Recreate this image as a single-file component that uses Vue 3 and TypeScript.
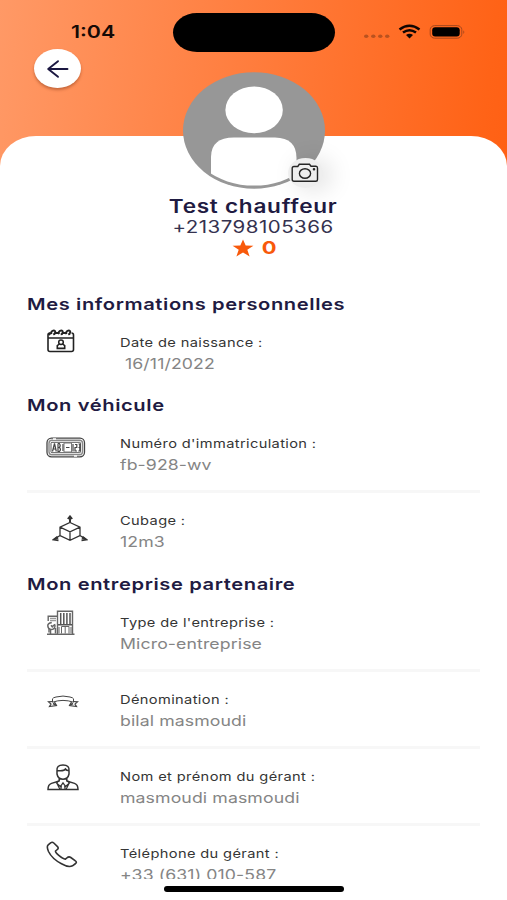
<script setup lang="ts">
interface Row {
  icon: string
  label: string
  value: string
  indent?: boolean
}
interface Section {
  title: string
  rows: Row[]
}

const sections: Section[] = [
  {
    title: 'Mes informations personnelles',
    rows: [{ icon: 'calendar', label: 'Date de naissance :', value: '16/11/2022', indent: true }],
  },
  {
    title: 'Mon véhicule',
    rows: [
      { icon: 'plate', label: "Numéro d'immatriculation :", value: 'fb-928-wv' },
      { icon: 'cube', label: 'Cubage :', value: '12m3' },
    ],
  },
  {
    title: 'Mon entreprise partenaire',
    rows: [
      { icon: 'building', label: "Type de l'entreprise :", value: 'Micro-entreprise' },
      { icon: 'ribbon', label: 'Dénomination :', value: 'bilal masmoudi' },
      { icon: 'manager', label: 'Nom et prénom du gérant :', value: 'masmoudi masmoudi' },
      { icon: 'phone', label: 'Téléphone du gérant :', value: '+33 (631) 010-587' },
    ],
  },
]
</script>

<template>
  <main class="screen">
    <header class="status">
      <span class="time"><span class="wide">1:04</span></span>
      <span class="island"></span>
      <svg class="signals" width="104" height="18" viewBox="0 0 104 18">
        <g fill="#b9521f">
          <ellipse cx="3.2" cy="13.2" rx="2.2" ry="1.8" /><ellipse cx="10.3" cy="13.2" rx="2.2" ry="1.8" />
          <ellipse cx="17.3" cy="13.2" rx="2.2" ry="1.8" /><ellipse cx="24.2" cy="13.2" rx="2.2" ry="1.8" />
        </g>
        <g fill="none" stroke="#100603" stroke-width="2.5">
          <path d="M36.5 6.5Q46.5-1 56.5 6.5" />
          <path d="M40 9.6Q46.5 4.8 53 9.6" />
        </g>
        <path d="M43 12Q46.5 9.6 50 12L46.5 15.4Z" fill="#100603" />
        <rect x="67.2" y="2.6" width="31.6" height="12.6" rx="4.5" ry="4" fill="none" stroke="#a8481c" />
        <rect x="69.2" y="4.2" width="27.5" height="9.4" rx="3" fill="#000" />
        <path d="M100.3 7.2q2 1.8 0 3.8z" fill="#a8481c" />
      </svg>
    </header>

    <button class="back" aria-label="Retour">
      <svg width="24" height="20" viewBox="0 0 24 20" fill="none" stroke="#1b1741" stroke-width="1.9">
        <path d="M21.5 10H2.2M12 2.2L2.2 10L12 17.8" stroke-linecap="round" stroke-linejoin="round" />
      </svg>
    </button>

    <section class="card">
      <div class="profile">
        <h1><span class="wide">Test chauffeur</span></h1>
        <p class="tel"><span class="wide">+213798105366</span></p>
        <p class="rating">
          <svg width="22" height="18" viewBox="0 0 22 18">
            <path d="M11 .5L13.7 6.6L21.4 6.7L15.3 10.8L17.6 17.4L11 13.5L4.4 17.4L6.7 10.8L.6 6.7L8.3 6.6Z" fill="#f8590b" />
          </svg>
          <span class="wide">0</span>
        </p>
      </div>

      <section v-for="s in sections" :key="s.title" class="group">
        <h2><span class="wide">{{ s.title }}</span></h2>
        <div v-for="r in s.rows" :key="r.label" class="row">
          <div class="icon">
            <svg v-if="r.icon === 'calendar'" class="calendar" width="28" height="24" viewBox="0 0 28 24" fill="none" stroke="#222">
              <path d="M3 4Q1 4 1 6V20.5Q1 22.5 3 22.5H24.5Q26.5 22.5 26.5 20.5V6Q26.5 4 24.5 4M1.5 9H26" stroke-width="1.6" />
              <path d="M4.5 5.2Q3.5 3 5.5 1.8Q8 .9 8.3 3Q8 5.2 6.2 5.4M12 5.2Q11 3 13 1.8Q15.5 .9 15.8 3Q15.5 5.2 13.7 5.4M19.5 5.2Q18.5 3 20.5 1.8Q23 .9 23.3 3Q23 5.2 21.2 5.4M8.5 4h3M16 4h3M1.5 6l2-2" stroke-width="1.9" />
              <ellipse cx="14" cy="13.3" rx="2.3" ry="2.2" stroke-width="1.5" />
              <path d="M12.3 15L10.3 16.6V19.4H17.7V16.6L15.7 15" stroke-width="1.6" />
            </svg>
            <svg v-else-if="r.icon === 'plate'" class="plate" width="40" height="22" viewBox="0 0 40 22" fill="none" stroke="#444">
              <rect x="1" y="1.2" width="37.5" height="18.6" rx="4.5" stroke-width="1.3" />
              <rect x="3" y="3.2" width="33.5" height="14.6" rx="3" stroke="#888" stroke-width="1.4" />
              <rect x="5" y="5.3" width="29.5" height="10.4" rx="1" stroke-width=".9" />
              <path d="M6.5 14.5L8.5 6.5L10.3 14.5M7.2 12h2.4M12 6.5V14.5H13.4Q15.5 12.5 13.4 10.5H12M12 6.5h1.4Q15 8.5 13.4 10.5M17 7v7M27 7v7.5M29 7.5h1.8v3h-1.8v3.5h2M32.5 7h1.3v7h-1.5M32.5 10.5h1" stroke-width="1.2" />
              <rect x="18" y="6" width="7.5" height="9" stroke="#777" /><path d="M20 10.5h3.5" />
              <path d="M7 2h3M28 19h3" stroke="#fff" stroke-width="1.5" />
            </svg>
            <svg v-else-if="r.icon === 'cube'" class="cube" width="36" height="28" viewBox="0 0 36 28" fill="none" stroke="#333" stroke-width="1.3">
              <path d="M18 7.5L28 12.2V20.5L18 25.4L8 20.5V12.2ZM8 12.2L18 16.8L28 12.2M18 16.8V25.4M18 8V2M8 20.5L2 24.5M28 20.5L34 24.5" />
              <path d="M15.8 4L18 1.3L20.2 4M5.5 21.8L1.7 24.6L6.5 25.3M30.5 21.8L34.3 24.6L29.5 25.3" stroke-width="1.8" />
              <path d="M18 2.5v5M4 23.5l2-1M32 23.5l-2-1" stroke-width="2" />
            </svg>
            <svg v-else-if="r.icon === 'building'" class="building" width="30" height="26" viewBox="0 0 30 26" fill="none" stroke="#666">
              <path d="M11.5 24V1.2H26.5V24M1 24.2H28.5M2.2 11V6.2H11.5M3 22.5V18" stroke-width="1.4" />
              <path d="M14.7 3v11M17.8 3v11M20.9 3v11M24 3v11M12 14.8h14" stroke="#555" stroke-width="1.5" />
              <path d="M4 8.3h6M4 10.5h6" stroke="#999" stroke-width="1.3" />
              <path d="M15.5 23.5V16.5H23V23.5M19.2 16.5v7M13 17v6M25 17v6" />
              <path d="M5.8 12.5Q1.5 13.2 1.8 16Q2.2 19.3 5 19.5Q8.7 19.5 9 16L8.5 14M5 15.2l1.3 1.6L8 15M4.5 19.5V24M9.5 18v5.5" stroke-width="1.5" />
            </svg>
            <svg v-else-if="r.icon === 'ribbon'" class="ribbon" width="32" height="13" viewBox="0 0 32 13" fill="none" stroke="#444">
              <path d="M5.5 3.8Q6 2.6 9 2Q16 .1 23 2Q26 2.6 26.5 3.8V7.2Q16 3.6 5.5 7.2Z" stroke-width="1" />
              <path d="M5.5 6.5L1.5 6.8L4 9L2.5 11.5L9.5 10.5L7.5 7M26.5 6.5L30.5 6.8L28 9L29.5 11.5L22.5 10.5L24.5 7" stroke-width="1.2" />
              <path d="M6 8.5l3 1.5M26 8.5l-3 1.5" stroke-width="1.8" />
            </svg>
            <svg v-else-if="r.icon === 'manager'" class="manager" width="32" height="27" viewBox="0 0 32 27" fill="none" stroke="#333" stroke-width="1.5">
              <path d="M10 7Q9.2 1 16 1Q22.8 1 22 7V10Q21 15.2 16 15.2Q11 15.2 10 10ZM10 6.5Q17 7.5 18.5 5Q20 7 22 6.5M12.2 14V17.5M19.8 14V17.5M12.2 17L4.5 19.4Q1 20.5 1 25.6H31Q31 20.5 27.5 19.4L19.8 17" />
              <path d="M11.5 17L9.5 19L13.4 22.5L16 18.8L18.6 22.5L22.5 19L20.5 17M14.4 20.7L14 25M17.6 20.7L18 25M10 19.5L13 25.5M22 19.5L19 25.5" stroke-width="1.2" />
            </svg>
            <svg v-else class="phone" width="32" height="27" viewBox="0 0 32 27" fill="none" stroke="#333" stroke-width="1.6">
              <path d="M4.6 1.8Q6.3.6 7.8 2L11.5 5.6Q13 7.2 11.3 8.5L9.5 10Q9.2 11.5 12.5 14.2Q16.8 17.8 19.4 18.2L21.4 16.5Q23 15.3 24.8 16.5L29.4 19.8Q31.2 21 29.6 22.5L26.5 24.8Q22.5 26.8 15.5 22.8Q6 17.7 2.5 10.5Q.3 5.5 2.2 3.8Z" stroke-linejoin="round" />
            </svg>
          </div>
          <div class="info">
            <p class="label"><span class="wide">{{ r.label }}</span></p>
            <p class="value" :class="{ indent: r.indent }"><span class="wide">{{ r.value }}</span></p>
          </div>
        </div>
      </section>
    </section>

    <svg class="avatar" width="142" height="118" viewBox="0 0 142 118">
      <defs>
        <clipPath id="disc"><ellipse cx="71" cy="58.2" rx="69.6" ry="55.4" /></clipPath>
      </defs>
      <ellipse cx="71" cy="58.5" rx="71" ry="58.2" fill="#979797" />
      <ellipse cx="71.1" cy="37.9" rx="28.7" ry="23.4" fill="#fff" />
      <path d="M28 118V85Q28 65.5 51 65.5H92Q113.5 66 113.5 86V118Z" fill="#fff" clip-path="url(#disc)" />
    </svg>

    <button class="camera" aria-label="Changer la photo">
      <svg width="28" height="20" viewBox="0 0 28 20" fill="none" stroke="#252525" stroke-width="1.4">
        <path d="M3 3.5H6.8L8.3 1.3H18.5L20 3.2H25Q26.5 3.2 26.5 5V16.5Q26.5 18.3 24.8 18.3H3Q1.2 18.3 1.2 16.5V5.3Q1.2 3.5 3 3.5Z" />
        <ellipse cx="14" cy="10.5" rx="5.6" ry="4.8" />
        <circle cx="23" cy="6.2" r=".6" />
      </svg>
    </button>

    <div class="home"><span></span></div>
  </main>
</template>

<style>
body {
  margin: 0;
}
</style>

<style scoped>
.screen {
  position: relative;
  width: 507px;
  height: 900px;
  overflow: hidden;
  box-sizing: border-box;
  padding-top: 136px;
  background: linear-gradient(97deg, #ff9966 0, #ff7c3c 50%, #ff6317 94%, #ff6014 100%) top / 100% 190px no-repeat #fff;
  font-family: Inter, 'Liberation Sans', sans-serif;
  color: #1f1b42;
}
h1,
h2,
p {
  margin: 0;
}
button {
  border: 0;
  padding: 0;
  display: flex;
  align-items: center;
  justify-content: center;
  border-radius: 50%;
}
svg {
  display: block;
  flex: none;
}
.wide {
  display: inline-block;
  white-space: nowrap;
  transform: scaleX(1.22);
  transform-origin: left center;
}
.status {
  position: absolute;
  inset: 0 0 auto;
  height: 64px;
}
.time {
  position: absolute;
  left: 71px;
  top: 20px;
  font-size: 17.5px;
  line-height: 24px;
  font-weight: 600;
  color: #160a06;
}
.island {
  position: absolute;
  left: 173px;
  top: 13px;
  width: 162px;
  height: 39px;
  border-radius: 24px / 19.5px;
  background: #000;
}
.signals {
  position: absolute;
  left: 363px;
  top: 23px;
}
.back {
  position: absolute;
  left: 34px;
  top: 49px;
  width: 47px;
  height: 39px;
  background: #fff;
  box-shadow: 0 2px 3px rgba(110, 40, 10, 0.4);
}
.card {
  height: 743px;
  overflow: hidden;
  background: #fff;
  border-radius: 36px 36px 0 0 / 30px 30px 0 0;
}
.profile {
  box-sizing: border-box;
  height: 156px;
  padding-top: 59px;
  text-align: center;
}
.profile .wide {
  transform-origin: center;
}
h1 {
  font-size: 18.5px;
  line-height: 22px;
  font-weight: 600;
  letter-spacing: 0.6px;
}
.tel {
  font-size: 16.8px;
  line-height: 20px;
  letter-spacing: 0.4px;
  color: #35324f;
}
.rating {
  display: flex;
  justify-content: center;
  align-items: center;
  gap: 9px;
  height: 22px;
  font-size: 18px;
  line-height: 22px;
  font-weight: 700;
  color: #f8590b;
}
h2 {
  padding-left: 27px;
  font-size: 16.5px;
  line-height: 24px;
  font-weight: 600;
  letter-spacing: 0.5px;
}
.row {
  display: flex;
  box-sizing: border-box;
  height: 76.2px;
  margin: 0 27px 1px;
  padding-top: 17px;
}
.row:not(:last-child) {
  border-bottom: 3px solid #f7f7f7;
}
.icon {
  width: 92.5px;
}
.calendar {
  margin: -4px 0 0 20px;
}
.plate {
  margin: 3px 0 0 19px;
}
.cube {
  margin: 4px 0 0 25px;
}
.building {
  margin: -3px 0 0 19px;
}
.ribbon {
  margin: 5px 0 0 20px;
}
.manager {
  margin: -3px 0 0 20px;
}
.phone {
  margin: -3px 0 0 19px;
}
.label {
  font-size: 12px;
  line-height: 20px;
  letter-spacing: 0.3px;
  color: #353535;
}
.value {
  font-size: 14.5px;
  line-height: 21px;
  letter-spacing: 0.08px;
  color: #858585;
}
.indent {
  padding-left: 5px;
}
.avatar {
  position: absolute;
  left: 183px;
  top: 72px;
}
.camera {
  position: absolute;
  left: 287.5px;
  top: 158px;
  width: 35px;
  height: 30px;
  background: #eee;
  box-shadow: 8px 2px 24px rgba(0, 0, 0, 0.13);
}
.home {
  display: flex;
  justify-content: center;
  padding-top: 7px;
}
.home span {
  width: 180px;
  height: 6px;
  border-radius: 3px;
  background: #000;
}
</style>
